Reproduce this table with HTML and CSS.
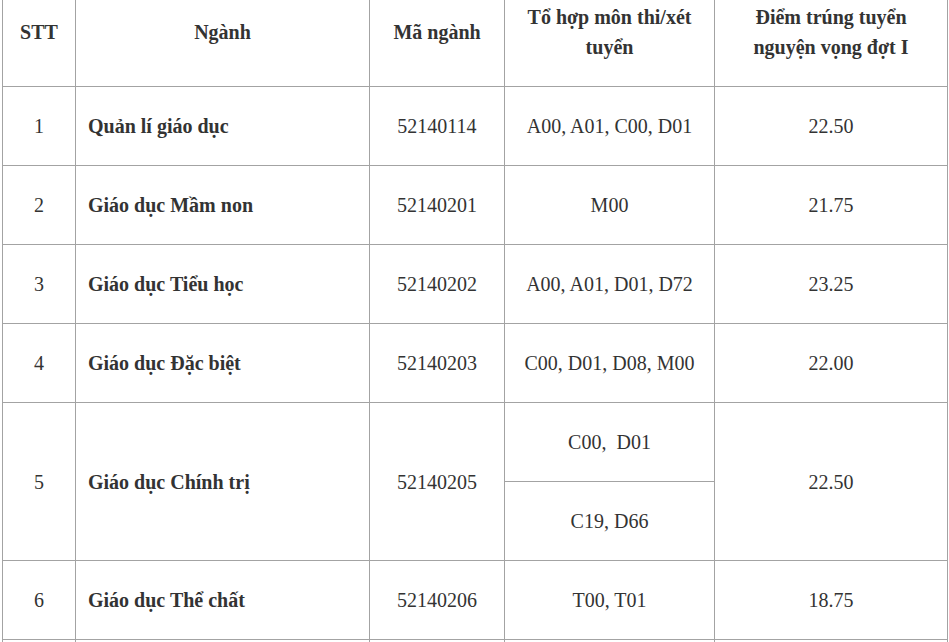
FILE: index.html
```html
<!DOCTYPE html>
<html lang="vi">
<head>
<meta charset="utf-8">
<link rel="stylesheet" href="styles.css">
</head>
<body>
<table class="scores">
  <colgroup>
    <col class="c-stt">
    <col class="c-name">
    <col class="c-code">
    <col class="c-combo">
    <col class="c-score">
  </colgroup>
  <thead>
    <tr>
      <th>STT</th>
      <th>Ngành</th>
      <th>Mã ngành</th>
      <th>Tổ hợp môn thi/xét tuyển</th>
      <th>Điểm trúng tuyển nguyện vọng đợt I</th>
    </tr>
  </thead>
  <tbody>
    <tr>
      <td>1</td>
      <td class="name">Quản lí giáo dục</td>
      <td>52140114</td>
      <td>A00, A01, C00, D01</td>
      <td>22.50</td>
    </tr>
    <tr>
      <td>2</td>
      <td class="name">Giáo dục Mầm non</td>
      <td>52140201</td>
      <td>M00</td>
      <td>21.75</td>
    </tr>
    <tr>
      <td>3</td>
      <td class="name">Giáo dục Tiểu học</td>
      <td>52140202</td>
      <td>A00, A01, D01, D72</td>
      <td>23.25</td>
    </tr>
    <tr>
      <td>4</td>
      <td class="name">Giáo dục Đặc biệt</td>
      <td>52140203</td>
      <td>C00, D01, D08, M00</td>
      <td>22.00</td>
    </tr>
    <tr>
      <td rowspan="2">5</td>
      <td rowspan="2" class="name">Giáo dục Chính trị</td>
      <td rowspan="2">52140205</td>
      <td>C00,&nbsp; D01</td>
      <td rowspan="2">22.50</td>
    </tr>
    <tr>
      <td>C19, D66</td>
    </tr>
    <tr>
      <td>6</td>
      <td class="name">Giáo dục Thể chất</td>
      <td>52140206</td>
      <td>T00, T01</td>
      <td>18.75</td>
    </tr>
    <tr class="next">
      <td></td>
      <td></td>
      <td></td>
      <td></td>
      <td></td>
    </tr>
  </tbody>
</table>
</body>
</html>
```

FILE: styles.css
```css
html, body {
  margin: 0;
  padding: 0;
  background: #fff;
}
body {
  padding-left: 2px;
  font-family: "Liberation Serif", "Times New Roman", serif;
  font-size: 20px;
  color: #333;
}
.scores {
  border-collapse: collapse;
  table-layout: fixed;
  width: 945px;
}
.c-stt { width: 73px; }
.c-name { width: 294px; }
.c-code { width: 135px; }
.c-combo { width: 210px; }
.c-score { width: 233px; }

.scores th,
.scores td {
  border: 1px solid #a3a3a3;
  text-align: center;
  vertical-align: middle;
  padding: 0 8px;
  line-height: 30px;
}
.scores th {
  border-top: none;
  height: 64px;
  padding-bottom: 22px;
  font-weight: bold;
}
.scores td {
  height: 78px;
}
.scores td.name {
  text-align: left;
  padding-left: 12px;
  font-weight: bold;
}
```
